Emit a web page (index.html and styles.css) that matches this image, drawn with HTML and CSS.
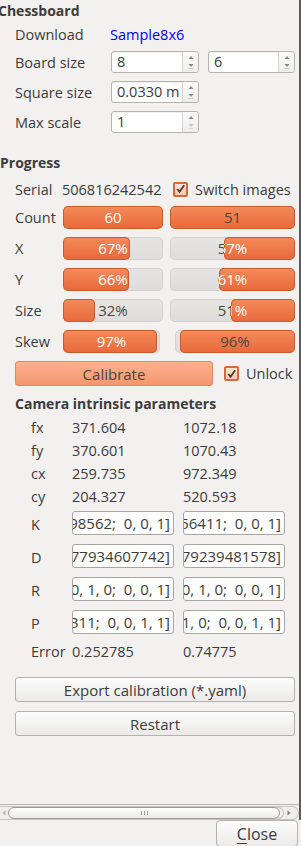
FILE: index.html
```html
<!DOCTYPE html>
<html lang="en">
<head>
<meta charset="UTF-8" />
<meta name="viewport" content="width=device-width, initial-scale=1" />
<title>Calibration</title>
<link rel="stylesheet" href="styles.css">
</head>
<body>
<div class="frame">
  <div class="viewport">
    <section class="group">
      <h2 class="group-title">Chessboard</h2>
      <div class="form-grid">
        <span class="label">Download</span>
        <a class="link" href="#">Sample8x6</a>
        <span></span>

        <span class="label">Board size</span>
        <div class="spin"><span class="spin-text">8</span><span class="spin-btns"><svg width="8" height="18" viewBox="0 0 8 18"><path d="M1.5 6 L4 3 L6.5 6 Z" fill="#8a8784"/><path d="M1.5 11 L4 14 L6.5 11 Z" fill="#8a8784"/><path d="M1.5 15.5 H6.5" stroke="#c9c6c3"/></svg></span></div>
        <div class="spin"><span class="spin-text">6</span><span class="spin-btns"><svg width="8" height="18" viewBox="0 0 8 18"><path d="M1.5 6 L4 3 L6.5 6 Z" fill="#8a8784"/><path d="M1.5 11 L4 14 L6.5 11 Z" fill="#8a8784"/><path d="M1.5 15.5 H6.5" stroke="#c9c6c3"/></svg></span></div>

        <span class="label">Square size</span>
        <div class="spin"><span class="spin-text">0.0330 m</span><span class="spin-btns"><svg width="8" height="18" viewBox="0 0 8 18"><path d="M1.5 6 L4 3 L6.5 6 Z" fill="#8a8784"/><path d="M1.5 11 L4 14 L6.5 11 Z" fill="#8a8784"/><path d="M1.5 15.5 H6.5" stroke="#c9c6c3"/></svg></span></div>
        <span></span>

        <span class="label">Max scale</span>
        <div class="spin"><span class="spin-text">1</span><span class="spin-btns"><svg width="8" height="18" viewBox="0 0 8 18"><path d="M1.5 6 L4 3 L6.5 6 Z" fill="#8a8784"/><path d="M1.5 11 L4 14 L6.5 11 Z" fill="#c9c6c3"/><path d="M1.5 15.5 H6.5" stroke="#dcd9d6"/></svg></span></div>
        <span></span>
      </div>
    </section>

    <section class="group">
      <h2 class="group-title">Progress</h2>
      <div class="serial-row">
        <span class="label serial-label">Serial</span>
        <span class="serial-value">506816242542</span>
        <label class="check"><span class="box"><svg width="12" height="12" viewBox="0 0 12 12"><path d="M2.5 6 L5 9 L10 2" fill="none" stroke="#4e3a30" stroke-width="2"/></svg></span>Switch images</label>
      </div>

      <div class="bar-row">
        <span class="label bar-label">Count</span>
        <div class="bar bar-a"><span class="bar-text">60</span><div class="chunk" style="width:100%"><span class="bar-text light">60</span></div></div>
        <div class="bar bar-b"><span class="bar-text">51</span><div class="chunk end" style="width:100%"><span class="bar-text">51</span></div></div>
      </div>
      <div class="bar-row">
        <span class="label bar-label">X</span>
        <div class="bar bar-a"><span class="bar-text">67%</span><div class="chunk" style="width:67%"><span class="bar-text light">67%</span></div></div>
        <div class="bar bar-b"><span class="bar-text">57%</span><div class="chunk end" style="width:57%"><span class="bar-text light">57%</span></div></div>
      </div>
      <div class="bar-row">
        <span class="label bar-label">Y</span>
        <div class="bar bar-a"><span class="bar-text">66%</span><div class="chunk" style="width:66%"><span class="bar-text light">66%</span></div></div>
        <div class="bar bar-b"><span class="bar-text">61%</span><div class="chunk end" style="width:61%"><span class="bar-text light">61%</span></div></div>
      </div>
      <div class="bar-row">
        <span class="label bar-label">Size</span>
        <div class="bar bar-a"><span class="bar-text">32%</span><div class="chunk" style="width:32%"><span class="bar-text light">32%</span></div></div>
        <div class="bar bar-b"><span class="bar-text">51%</span><div class="chunk end" style="width:51%"><span class="bar-text light">51%</span></div></div>
      </div>
      <div class="bar-row skew">
        <span class="label bar-label">Skew</span>
        <div class="bar bar-a"><span class="bar-text">97%</span><div class="chunk" style="width:97%"><span class="bar-text light">97%</span></div></div>
        <div class="bar bar-b"><span class="bar-text">96%</span><div class="chunk end" style="width:96%"><span class="bar-text">96%</span></div></div>
      </div>

      <div class="calib-row">
        <button class="btn-calibrate">Calibrate</button>
        <label class="check"><span class="box"><svg width="12" height="12" viewBox="0 0 12 12"><path d="M2.5 6 L5 9 L10 2" fill="none" stroke="#4e3a30" stroke-width="2"/></svg></span>Unlock</label>
      </div>

      <h3 class="sub-title">Camera intrinsic parameters</h3>
      <div class="params">
        <span class="p-label">fx</span><span>371.604</span><span>1072.18</span>
        <span class="p-label">fy</span><span>370.601</span><span>1070.43</span>
        <span class="p-label">cx</span><span>259.735</span><span>972.349</span>
        <span class="p-label">cy</span><span>204.327</span><span>520.593</span>

        <span class="p-label">K</span>
        <div class="field"><span>698562;  0, 0, 1]</span></div>
        <div class="field"><span>356411;  0, 0, 1]</span></div>

        <span class="p-label">D</span>
        <div class="field"><span>077934607742]</span></div>
        <div class="field"><span>079239481578]</span></div>

        <span class="p-label">R</span>
        <div class="field"><span> 0, 1, 0;  0, 0, 1]</span></div>
        <div class="field"><span> 0, 1, 0;  0, 0, 1]</span></div>

        <span class="p-label">P</span>
        <div class="field"><span>.311;  0, 0, 1, 1]</span></div>
        <div class="field"><span>, 1, 0;  0, 0, 1, 1]</span></div>

        <span class="p-label">Error</span><span>0.252785</span><span>0.74775</span>
      </div>

      <button class="btn wide">Export calibration (*.yaml)</button>
      <button class="btn wide">Restart</button>
    </section>
  </div>

  <div class="hscroll">
    <span class="arrow left"><svg width="4" height="6" viewBox="0 0 4 6"><path d="M3.5 0.5 L0.5 3 L3.5 5.5 Z" fill="#b5b2af"/></svg></span>
    <div class="handle"><span class="grip"></span><span class="grip"></span><span class="grip"></span></div>
    <span class="groove-end"></span>
    <span class="arrow right"><svg width="4" height="6" viewBox="0 0 4 6"><path d="M0.5 0.5 L3.5 3 L0.5 5.5 Z" fill="#7d7a77"/></svg></span>
  </div>
</div>

<footer class="footer">
  <button class="btn close"><u>C</u>lose</button>
</footer>
</body>
</html>
```

FILE: styles.css
```css
* {
  box-sizing: border-box;
}
html, body {
  margin: 0;
  height: 846px;
  overflow: hidden;
}
body {
  background: #f2f1f0;
  font-family: 'Open Sans', 'Noto Sans', sans-serif;
  font-size: 14.5px;
  color: #3c3c3c;
}

/* scroll area with its frame */
.frame {
  width: 301px;
  height: 820px;
  border-right: 2px solid #5e5c5a;
  display: flex;
  flex-direction: column;
}
.viewport {
  height: 805px;
  border-bottom: 1px solid #b9b6b3;
  overflow: hidden;
  padding-right: 2px;
}

.group-title {
  margin: 0 0 0 -2px;
  font-size: 14px;
  font-weight: 700;
  line-height: 18px;
}
.group:first-child .group-title {
  padding-top: 2px;
}
.group + .group {
  margin-top: 21px;
}
.group + .group .group-title {
  margin-left: 0;
}
.label {
  white-space: nowrap;
}

/* Chessboard form */
.form-grid {
  display: grid;
  grid-template-columns: 87px 88px 87px;
  grid-template-rows: 18px 22px 22px 22px;
  column-gap: 9px;
  row-gap: 8px;
  padding-left: 15px;
  align-items: center;
  margin-top: 5px;
}
.link {
  color: #0000ff;
  text-decoration: none;
  margin-left: -1px;
}
.spin {
  height: 22px;
  display: flex;
  background: #fff;
  border: 1px solid #b6b2ae;
  border-radius: 3px;
  box-shadow: inset 0 1px 1px rgba(0,0,0,0.06);
}
.spin-text {
  flex: 1;
  padding-left: 5px;
  line-height: 20px;
  white-space: nowrap;
  overflow: hidden;
}
.spin-btns {
  width: 16px;
  border-left: 1px solid #d6d3d0;
  background: linear-gradient(#fbfbfb, #efeeed);
  border-radius: 0 3px 3px 0;
  display: flex;
  align-items: center;
  justify-content: center;
}

/* Progress */
.serial-row {
  display: flex;
  align-items: center;
  height: 20px;
  margin-top: 7px;
  padding-left: 15px;
}
.serial-label {
  width: 47px;
}
.serial-value {
  width: 111px;
  white-space: nowrap;
}
.check {
  display: flex;
  align-items: center;
  gap: 7px;
  white-space: nowrap;
}
.box {
  width: 15px;
  height: 15px;
  border: 2px solid #d4693c;
  border-radius: 2px;
  background: linear-gradient(#fbe3d6, #f4c9b2);
  display: flex;
  align-items: center;
  justify-content: center;
}

.bar-row {
  display: flex;
  align-items: center;
  height: 23px;
  margin-top: 8px;
  padding-left: 15px;
}
.serial-row + .bar-row {
  margin-top: 7px;
}
.bar-label {
  width: 48px;
}
.bar {
  position: relative;
  height: 23px;
  background: linear-gradient(#e6e5e4, #dedddc);
  box-shadow: inset 0 0 0 1px #d3d1cf;
  border-radius: 5px;
  overflow: hidden;
}
.bar-a {
  width: 100px;
}
.bar-b {
  width: 125px;
  margin-left: 7px;
}
.skew .bar-a {
  width: 97px;
}
.skew .bar-b {
  width: 120px;
  margin-left: 15px;
}
.bar-text {
  position: absolute;
  left: 0;
  top: 0;
  width: 100%;
  line-height: 23px;
  text-align: center;
  font-size: 15px;
  color: #4a4644;
}
.bar-text.light {
  color: #fff;
}
.chunk {
  position: absolute;
  top: 0;
  bottom: 0;
  left: 0;
  overflow: hidden;
  background: linear-gradient(#f58b5c, #e8683a);
  box-shadow: inset 0 0 0 1px #c75b2f;
  border-radius: 5px;
}
.chunk.end {
  left: auto;
  right: 0;
}
.bar-a .chunk .bar-text {
  width: 100px;
  left: 0;
}
.bar-b .chunk .bar-text {
  width: 125px;
  left: auto;
  right: 0;
}
.skew .bar-a .chunk .bar-text {
  width: 97px;
}
.skew .bar-b .chunk .bar-text {
  width: 120px;
}

.calib-row {
  display: flex;
  align-items: center;
  gap: 11px;
  margin-top: 8px;
  padding-left: 15px;
}
.btn-calibrate {
  width: 198px;
  height: 25px;
  font: inherit;
  font-size: 15px;
  color: #4a4644;
  background: linear-gradient(#fbb08f, #f4986f);
  border: 1px solid #d68a68;
  border-radius: 3px;
  padding: 0;
}

/* Camera intrinsics */
.sub-title {
  margin: 9px 0 0 15px;
  font-size: 14px;
  font-weight: 700;
  line-height: 18px;
}
.params {
  display: grid;
  grid-template-columns: 32px 102px 102px;
  grid-template-rows: 23px 23px 23px 23px 33px 33px 33px 33px 23px;
  column-gap: 9px;
  padding-left: 31px;
  margin-top: 3px;
  align-items: center;
}
.params > span {
  white-space: nowrap;
}
.params > .field {
  height: 24px;
  margin: 3px 0 6px;
}
.field {
  background: #fff;
  border: 1px solid #a9a5a1;
  border-radius: 3px;
  display: flex;
  justify-content: flex-end;
  align-items: center;
  overflow: hidden;
  padding-right: 3px;
  font-size: 15px;
  white-space: pre;
}
.field span {
  flex-shrink: 0;
}

.btn {
  font: inherit;
  font-size: 15px;
  color: #3c3c3c;
  background: linear-gradient(#fcfcfc, #ebeae9);
  border: 1px solid #b5b1ad;
  border-radius: 3px;
  padding: 0;
}
.wide {
  display: block;
  width: 280px;
  height: 25px;
  margin-left: 15px;
}
.params + .wide {
  margin-top: 14px;
}
.wide + .wide {
  margin-top: 9px;
}

/* horizontal scrollbar */
.hscroll {
  height: 14px;
  margin-top: 1px;
  display: flex;
  align-items: center;
  border: 1px solid #c6c3c0;
  border-left: none;
  border-radius: 0 7px 7px 0;
  background: #efeeed;
}
.arrow {
  width: 8px;
  display: flex;
  justify-content: center;
}
.handle {
  width: 272px;
  height: 12px;
  border: 1px solid #9e9a97;
  border-radius: 7px;
  background: linear-gradient(#ffffff, #ebeae9);
  display: flex;
  align-items: center;
  justify-content: center;
  gap: 2px;
}
.grip {
  width: 1px;
  height: 4px;
  background: #a5a19e;
}
.groove-end {
  width: 8px;
  height: 12px;
  border: 1px solid #c6c3c0;
  border-left: none;
  border-radius: 0 7px 7px 0;
  margin-left: -4px;
}
.arrow.right {
  margin-left: 1px;
}

.footer {
  display: flex;
  justify-content: flex-end;
  padding-right: 3px;
}
.close {
  width: 82px;
  height: 27px;
  font-size: 16px;
  border-radius: 4px;
}
.close u {
  text-underline-offset: 3px;
}
```
